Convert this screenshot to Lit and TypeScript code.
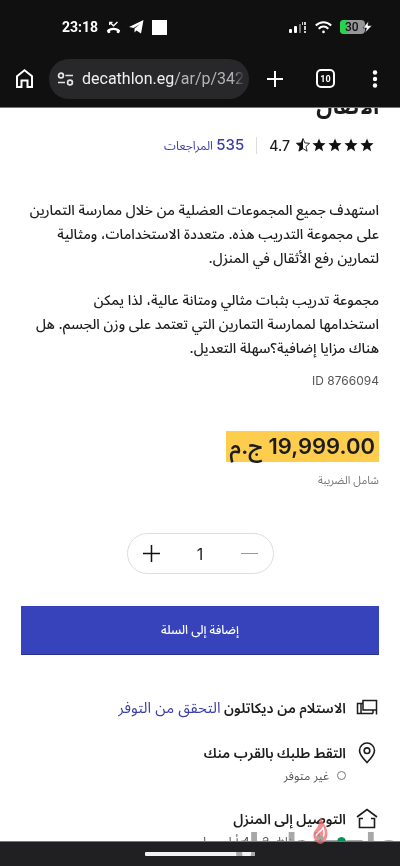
import { LitElement, html, css, svg } from "lit";
import { customElement, state } from "lit/decorators.js";

const star = "M8 0.6l2.1 5 5.4.5-4.1 3.6 1.3 5.3L8 12.1 3.3 15l1.3-5.3L.5 6.1l5.4-.5z";

@customElement("app-root")
export class AppRoot extends LitElement {
  @state() private quantity = 1;

  static styles = css`
    :host {
      display: flex;
      flex-direction: column;
      height: 100vh;
      position: relative;
      overflow: hidden;
      background: #fff;
      color: #1c1c1c;
      font-family: Inter, "Noto Sans Arabic", "DejaVu Sans", sans-serif;
    }
    * { box-sizing: border-box; }
    svg { display: block; flex: none; }
    button { border: 0; padding: 0; background: none; color: inherit; font: inherit; }
    a { color: #3a3fa8; text-decoration: none; }
    h1, h2, p { margin: 0; }
    .chrome { flex: none; background: #101011; color: #fff; border-bottom: 1px solid #77777a; }
    .status { display: flex; align-items: center; height: 50px; padding: 4px 28px 0 62px; gap: 8px; }
    .clock { font: 700 14px/20px Roboto, sans-serif; }
    .grow { flex: 1; }
    .bar { display: flex; align-items: center; height: 57px; padding: 0 16px; }
    .address {
      display: flex; align-items: center; gap: 8px; flex: 1; min-width: 0;
      height: 40px; margin: 0 17px 0 16px; padding: 0 4px 0 8px; border-radius: 20px; background: #28282b;
    }
    .url {
      flex: 1; min-width: 0; overflow: hidden; white-space: nowrap; text-align: left;
      font: 400 16px/24px Roboto, sans-serif; color: #b4b4b7;
      -webkit-mask-image: linear-gradient(90deg, #000 92%, transparent);
    }
    .url b { font-weight: 400; color: #f0f0f2; }
    .tools { display: flex; align-items: center; }
    .tabs { margin: 0 31px 0 32px; }
    .page { flex: 1; min-height: 0; overflow: hidden; padding: 0 21px; }
    .title { height: 14px; display: flex; align-items: flex-end; font-size: 22px; line-height: 32px; font-weight: 700; }
    .rating { display: flex; align-items: center; height: 20px; margin-top: 13px; padding: 0 5px; font-size: 14px; }
    .stars { display: flex; gap: 2px; }
    .score { margin: 0 6px 0 12px; font-weight: 500; }
    .reviews { border-right: 1px solid #ddd; padding-right: 12px; font-size: 12px; line-height: 16px; }
    .reviews b { font-size: 15px; font-weight: 500; }
    .copy { margin-top: 43px; font-size: 14px; line-height: 24px; font-weight: 500; }
    .copy p + p { margin-top: 18px; }
    .small { font-size: 12px; line-height: 16px; color: #555; }
    .id { margin-top: 13px; }
    .price { display: table; margin-top: 42px; padding: 0 4px; background: #ffcd4e; font-size: 22px; line-height: 31px; font-weight: 600; }
    .tax { margin-top: 10px; font-size: 11px; color: #777; }
    .stepper {
      display: flex; align-items: center; justify-content: space-between; width: 147px; height: 41px;
      margin: 45px auto 0; padding: 0 15px; border: 1px solid #ddd; border-radius: 21px;
    }
    .count { width: 32px; border: 0; padding: 0; background: none; text-align: center; color: #1c1c1c; font: 400 16px/20px Inter, sans-serif; }
    .cart { display: block; width: 100%; height: 49px; margin-top: 32px; background: #3643ba; border-bottom: 1px solid #28318c; color: #fff; font-size: 12px; font-weight: 500; }
    .options { display: grid; gap: 21px; margin-top: 41px; }
    .option { display: flex; gap: 9px; }
    .option h2 { font-size: 14px; line-height: 24px; font-weight: 600; }
    .option h2 a { font-size: 15px; font-weight: 400; }
    .note { display: flex; align-items: center; gap: 8px; height: 21px; white-space: nowrap; }
    .dot { width: 9px; height: 9px; border: 1px solid #777; border-radius: 5px; }
    .dot.on { background: #0b8f5a; border-color: #0b8f5a; }
    .nav { flex: none; height: 25px; display: flex; justify-content: center; align-items: center; background: #202022; border-top: 1px solid #777; }
    .handle { width: 110px; height: 4px; border-radius: 1px; background: #f2f2f2; }
    .mark {
      position: absolute; right: 0; bottom: 0; pointer-events: none; mix-blend-mode: darken;
      font: 700 42px/34px "Liberation Sans", sans-serif; color: #a8a8a8;
    }
    .flame { position: absolute; right: 72px; bottom: 20px; pointer-events: none; opacity: 0.75; }
  `;

  private change(by: number) {
    this.quantity = Math.max(1, this.quantity + by);
  }

  render() {
    return html`
      <header class="chrome">
        <div class="status">
          <span class="clock">23:18</span>
          <svg width="15" height="13" viewBox="0 0 15 13" fill="none" stroke="#fff"><path d="M4 1.500l3.500 3.300L11.500 1M3.700 4V1.300h2.800" stroke-width="1.300"/><path d="M1.800 10.200c2.500-3.200 8.900-3.200 11.400 0" stroke-width="2.200"/><path d="M.8 9.500l3.400-1v3.200l-2.200.5zM14.200 9.500l-3.400-1v3.200l2.200.5z" fill="#fff" stroke="none"/></svg>
          <svg width="15" height="14" viewBox="0 0 15 14"><path d="M0 7L14.500 0 12 13.500 7.500 10.500 5.500 12.500V8.500L11 4 4.500 8z" fill="#fff"/></svg>
          <svg width="15" height="15"><rect width="15" height="15" fill="#fff"/></svg>
          <span class="grow"></span>
          <svg width="18" height="14" viewBox="0 0 18 14" fill="#fff"><rect y="9" width="3" height="4" rx="1"/><rect x="5" y="6" width="3" height="7" rx="1"/><path d="M10 4h2v9h-2z" opacity=".4"/><path d="M13 2h1v3h-1zM15 2h2v3h-2zM15 6h2v4h-2zM15 11h2v2h-2z" opacity=".8"/></svg>
          <svg width="17" height="13" viewBox="0 0 17 13" fill="none" stroke="#fff" stroke-width="2"><path d="M.8 4.500c4.500-4.300 10.900-4.300 15.400 0M3.700 7.700c2.800-2.800 6.800-2.800 9.600 0"/><circle cx="8.500" cy="10.900" r="1.300" fill="#fff" stroke="none"/></svg>
          <svg width="32" height="14" viewBox="0 0 32 14"><rect width="25" height="14" rx="4" fill="#96969a"/><path d="M4 0h4v14H4a4 4 0 0 1-4-4V4a4 4 0 0 1 4-4z" fill="#27d24c"/><text x="5" y="11" font-family="Roboto" font-size="12" font-weight="500" fill="#111">30</text><path d="M28.500 1L23 8h3.500L25 13l7-7.500h-4z" fill="#fff" stroke="#101011" stroke-width=".6"/></svg>
        </div>
        <div class="bar">
          <button aria-label="Home"><svg width="17" height="19" viewBox="0 0 17 19" fill="none" stroke="#fff" stroke-width="2"><path d="M1 7.200L8.500 1.300 16 7.200V18h-4.500v-6.500h-6V18H1z"/></svg></button>
          <div class="address">
            <svg width="17" height="14" viewBox="0 0 17 14" fill="none" stroke="#e5e5e7" stroke-width="1.700"><circle cx="4" cy="3.500" r="2.400"/><path d="M8.500 3.500H16M1 10.500h7"/><circle cx="13" cy="10.500" r="2.400"/></svg>
            <button class="url"><b>decathlon.eg</b>/ar/p/342</button>
          </div>
          <div class="tools">
            <button aria-label="New tab"><svg width="18" height="18" viewBox="0 0 18 18" stroke="#fff" stroke-width="2"><path d="M9 1v16M1 9h16"/></svg></button>
            <button class="tabs" aria-label="Tabs"><svg width="19" height="19" viewBox="0 0 19 19"><rect x="1" y="1" width="17" height="17" rx="4" fill="none" stroke="#fff" stroke-width="2"/><text x="9.500" y="12.500" text-anchor="middle" font-family="Roboto" font-size="9" font-weight="700" fill="#fff">10</text></svg></button>
            <button aria-label="More"><svg width="18" height="18" viewBox="0 0 18 18" fill="#fff"><circle cx="9" cy="2.500" r="2.200"/><circle cx="9" cy="9" r="2.200"/><circle cx="9" cy="15.500" r="2.200"/></svg></button>
          </div>
        </div>
      </header>
      <main class="page" dir="rtl" lang="ar">
        <h1 class="title">الأثقال</h1>
        <div class="rating">
          <span class="stars">${[1, 1, 1, 1, 0].map((full) => html`<svg width="14" height="14" viewBox="0 0 16 16">${full ? svg`<path d=${star} fill="#111"/>` : svg`<path d=${star} fill="none" stroke="#111"/><path d="M8 .6v11.500L3.300 15l1.300-5.300L.5 6.100l5.400-.5z" fill="#111"/>`}</svg>`)}</span>
          <span class="score">4.7</span>
          <a class="reviews" href="#reviews"><b>535</b> المراجعات</a>
        </div>
        <div class="copy">
          <p>استهدف جميع المجموعات العضلية من خلال ممارسة التمارين<br />على مجموعة التدريب هذه. متعددة الاستخدامات، ومثالية<br />لتمارين رفع الأثقال في المنزل.</p>
          <p>مجموعة تدريب بثبات مثالي ومتانة عالية، لذا يمكن<br />استخدامها لممارسة التمارين التي تعتمد على وزن الجسم. هل<br />هناك مزايا إضافية؟سهلة التعديل.</p>
        </div>
        <p class="small id"><bdi>ID 8766094</bdi></p>
        <p class="price">19,999.00 ج.م</p>
        <p class="small tax">شامل الضريبة</p>
        <div class="stepper">
          <button aria-label="-" @click=${() => this.change(-1)}><svg width="17" height="17" viewBox="0 0 17 17" stroke="#999"><path d="M0 8.500h17"/></svg></button>
          <input class="count" aria-label="الكمية" .value=${String(this.quantity)} />
          <button aria-label="+" @click=${() => this.change(1)}><svg width="17" height="17" viewBox="0 0 17 17" stroke="#111" stroke-width="1.500"><path d="M0 8.500h17M8.500 0v17"/></svg></button>
        </div>
        <button class="cart">إضافة إلى السلة</button>
        <section class="options">
          <div class="option">
            <svg width="24" height="24" viewBox="0 0 24 24" fill="none" stroke="#1c1c1c" stroke-width="1.500"><path d="M8 4.500h13.500V14H8zM8 7.500H2.500V17.500H7M6 7.500v10h12M18 14v3.500M21.500 14v4.500"/></svg>
            <h2>الاستلام من ديكاتلون <a href="#stock">التحقق من التوفر</a></h2>
          </div>
          <div class="option">
            <svg width="24" height="24" viewBox="0 0 24 24" fill="none" stroke="#1c1c1c" stroke-width="1.600"><path d="M12 21.500C8 17.500 4.500 13.500 4.500 9.500a7.500 7.500 0 0 1 15 0c0 4-3.500 8-7.500 12z"/><circle cx="12" cy="9.700" r="2.800"/></svg>
            <div><h2>التقط طلبك بالقرب منك</h2><p class="small note"><span class="dot"></span>غير متوفر</p></div>
          </div>
          <div class="option">
            <svg width="24" height="24" viewBox="0 0 24 24" fill="none" stroke="#1c1c1c" stroke-width="1.600"><path d="M2 10L12 2.500 22 10M8 11.500H4.500v9h15v-9H16"/></svg>
            <div><h2>التوصيل إلى المنزل</h2><p class="small note"><span class="dot on"></span>يشحن خلال 3 - 4 أيام عمل</p></div>
          </div>
        </section>
      </main>
      <footer class="nav"><span class="handle"></span></footer>
      <span class="mark">dubizzle</span>
      <svg class="flame" width="15" height="29" viewBox="0 0 15 29"><path d="M8 0c1 5 6 9 6.500 16 .3 6-3 10-7 11C3 26 0 22 .5 17 1 13 4 12 5 9c1-3 1-6 3-9z" fill="#f0696c"/><path d="M3 19c1-4 5-4 7-8 2 5 1 8-1 10" fill="none" stroke="#fff" stroke-width="1.500"/><circle cx="7.500" cy="21" r="3" fill="#888"/></svg>
    `;
  }
}
